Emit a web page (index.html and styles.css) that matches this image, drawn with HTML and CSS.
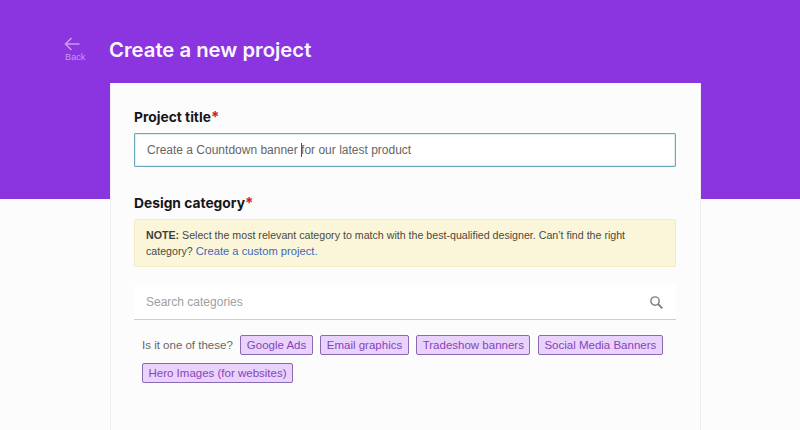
FILE: index.html
```html
<!DOCTYPE html>
<html lang="en">
<head>
<meta charset="utf-8">
<title>Create a new project</title>
<link rel="stylesheet" href="styles.css">
</head>
<body>
<div class="page">
  <header class="top">
    <a class="back" href="#">
      <svg class="back-icon" width="16" height="14" viewBox="0 0 16 14" fill="none" stroke="currentColor" stroke-width="1.6"><path d="M15.5 7H1.5M7.5 1 1.5 7l6 6"/></svg>
      <span>Back</span>
    </a>
    <h1>Create a new project</h1>
  </header>
  <main class="card">
    <h2 class="label">Project title<span class="req">*</span></h2>
    <div class="input"><span>Create a Countdown banner </span><span class="caret"></span><span>for our latest product</span></div>
    <h2 class="label label-second">Design category<span class="req">*</span></h2>
    <p class="note"><b>NOTE:</b> Select the most relevant category to match with the best-qualified designer. Can’t find the right category? <a href="#">Create a custom project.</a></p>
    <div class="search">
      <span>Search categories</span>
      <svg width="13" height="13" viewBox="0 0 15 15" fill="none" stroke="#808080" stroke-width="1.7"><circle cx="5.8" cy="5.8" r="4.8"/><path d="m9.2 9.2 5 5" stroke-width="2.2"/></svg>
    </div>
    <div class="tags">
      <span class="tags-q">Is it one of these?</span>
      <a class="tag" href="#">Google Ads</a>
      <a class="tag" href="#">Email graphics</a>
      <a class="tag" href="#">Tradeshow banners</a>
      <a class="tag" href="#">Social Media Banners</a>
      <a class="tag" href="#">Hero Images (for websites)</a>
    </div>
  </main>
</div>
</body>
</html>
```

FILE: styles.css
```css
* { box-sizing: border-box; }
html, body { margin: 0; height: 100%; overflow: hidden; }
body { font-family: "Liberation Sans", Arial, sans-serif; background: #fdfcfd; }
.page { height: 430px; background: linear-gradient(#8a35e0 199px, #fdfcfd 199px); }
.top { display: flex; align-items: flex-start; height: 83px; padding: 37px 0 0 63px; }
.back { display: flex; flex-direction: column; align-items: flex-start; width: 46px; color: #c79bf0; font-size: 9.2px; line-height: 10px; text-decoration: none; }
.back-icon { margin: 0 0 1px 1px; }
.back span { margin-left: 2px; }
h1 { margin: 0; color: #fbf6fe; font: 600 20.3px/26px "Inter", sans-serif; }
.card { width: 591px; height: 347px; margin-left: 110px; padding: 24px 24px 0 23px; background: #fdfcfd; border-right: 1px solid #eeeeee; border-left: 1px solid #eeeeee; }
.label { margin: 0; color: #16161a; font: 700 13.8px/20px "Inter", sans-serif; }
.req { color: #c8242f; font-size: 15px; }
.label-second { margin-top: 26px; }
.input { display: flex; align-items: center; height: 34px; margin-top: 6px; padding: 0 12px; background: #fff; border: 1px solid #69a9bb; box-shadow: inset 0 0 0 1px rgba(105, 170, 187, 0.2); white-space: pre; color: #666; font-size: 12px; border-radius: 1px; }
.caret { width: 1px; height: 14px; margin-right: -1px; background: #555; }
.note { height: 48px; margin: 6px 0 0; padding: 7px 11px; background: #fbf6d9; border: 1px solid #f3ecc3; border-radius: 2px; color: #4a4a40; font-size: 10.65px; line-height: 16px; }
.note b { color: #3f3f3a; }
.note a { color: #3f67bb; font-size: 11.2px; text-decoration: none; }
.search { display: flex; align-items: center; justify-content: space-between; height: 35px; margin-top: 18px; padding: 0 13px 0 12px; background: #fff; border-bottom: 1px solid #cfcfd2; color: #a0a0a0; font-size: 12px; }
.tags { display: flex; flex-wrap: wrap; align-items: center; gap: 8px 7.5px; margin-top: 15px; padding-left: 8px; }
.tags-q { color: #666; font-size: 11.5px; }
.tag { height: 20px; padding: 0 5.5px; background: #e9d2fb; border: 1px solid #8a6ab0; border-radius: 2px; color: #8544bb; font-size: 11.5px; line-height: 18px; text-decoration: none; }
```
